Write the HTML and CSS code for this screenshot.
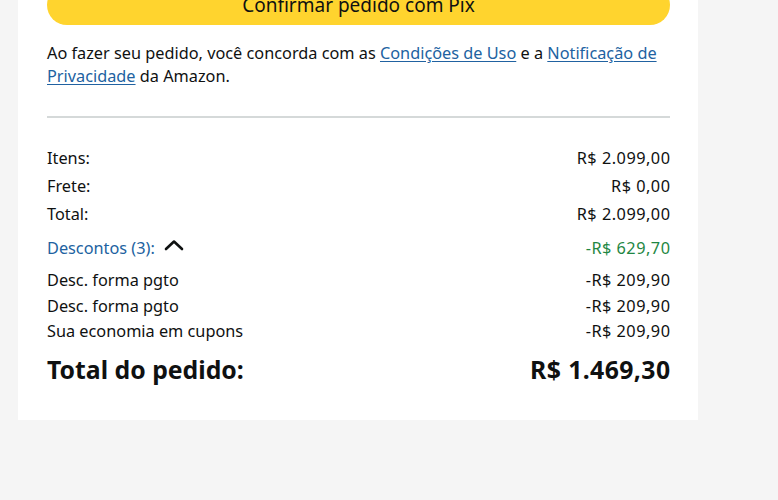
FILE: index.html
```html
<!DOCTYPE html>
<html lang="pt-BR">
<head>
<meta charset="utf-8">
<link rel="stylesheet" href="styles.css">
</head>
<body>
<div class="card">
  <button class="btn-pix">Confirmar pedido com Pix</button>
  <p class="terms">Ao fazer seu pedido, você concorda com as <a href="#">Condições de Uso</a> e a <a href="#">Notificação de Privacidade</a> da Amazon.</p>
  <hr class="divider">
  <div class="rows">
    <div class="row"><span>Itens:</span><span class="num">R$ 2.099,00</span></div>
    <div class="row"><span>Frete:</span><span class="num">R$ 0,00</span></div>
    <div class="row"><span>Total:</span><span class="num">R$ 2.099,00</span></div>
  </div>
  <div class="row discounts">
    <span class="disc-label">Descontos (3):
      <svg class="chev" width="20" height="12" viewBox="0 0 20 12"><path d="M2 10 L10 2.5 L18 10" fill="none" stroke="#0f1111" stroke-width="2.6" stroke-linecap="round" stroke-linejoin="round"/></svg>
    </span>
    <span class="num green">-R$ 629,70</span>
  </div>
  <div class="sub-rows">
    <div class="row sub"><span>Desc. forma pgto</span><span class="num">-R$ 209,90</span></div>
    <div class="row sub"><span>Desc. forma pgto</span><span class="num">-R$ 209,90</span></div>
    <div class="row sub"><span>Sua economia em cupons</span><span class="num">-R$ 209,90</span></div>
  </div>
  <div class="row grand"><span>Total do pedido:</span><span class="num">R$ 1.469,30</span></div>
</div>
</body>
</html>
```

FILE: styles.css
```css
html, body {
  margin: 0;
  padding: 0;
  background: #f5f5f5;
  font-family: "Noto Sans", "Open Sans", sans-serif;
  color: #0f1111;
}
.card {
  margin: -15px 0 0 18px;
  width: 680px;
  box-sizing: border-box;
  background: #fff;
  padding: 0 28px 36px 29px;
}
.btn-pix {
  display: block;
  width: 100%;
  height: 40px;
  border: none;
  border-radius: 20px;
  background: #ffd42e;
  font-family: inherit;
  font-size: 19px;
  line-height: 36px;
  color: #0f1111;
  padding: 0;
}
.terms {
  margin: 17px 0 0;
  font-size: 16.3px;
  line-height: 22.5px;
}
.terms a {
  color: #2162a1;
  text-decoration: underline;
  text-underline-offset: 2px;
}
.divider {
  border: none;
  height: 2px;
  background: #d5d9d9;
  margin: 29px 0 0;
}
.rows {
  margin-top: 26px;
}
.row {
  display: flex;
  justify-content: space-between;
  align-items: center;
  font-size: 16.3px;
  line-height: 28px;
}
.num {
  letter-spacing: 0.5px;
  margin-right: -0.5px;
}
.discounts {
  margin-top: 6px;
}
.disc-label {
  color: #2162a1;
  display: flex;
  align-items: center;
  gap: 9px;
}
.chev {
  margin-top: -6px;
}
.green {
  color: #1f8743;
}
.sub-rows {
  margin-top: 6px;
}
.sub {
  line-height: 25.5px;
}
.grand {
  margin-top: 9px;
  font-size: 24.8px;
  font-weight: bold;
  line-height: 30px;
}
.grand .num {
  letter-spacing: 0.4px;
}
```
